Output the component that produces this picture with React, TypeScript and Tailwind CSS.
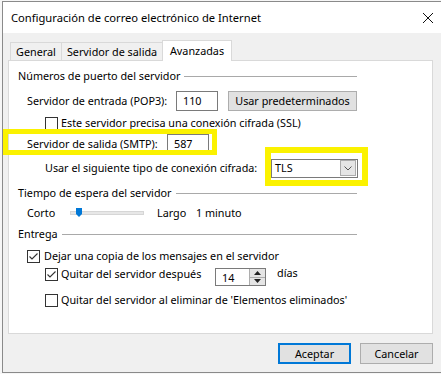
import React from "react";

function CheckBox({ checked }: { checked?: boolean }) {
  return (
    <svg width="13" height="13" viewBox="0 0 13 13" className="shrink-0">
      <rect x="0.5" y="0.5" width="12" height="12" fill="#ffffff" stroke="#333333" />
      {checked && (
        <path d="M2.5 6.5 L5 9 L10.5 3.5" fill="none" stroke="#333333" strokeWidth="1.1" />
      )}
    </svg>
  );
}

function GroupHeader({ label }: { label: string }) {
  return (
    <div className="flex items-center h-[16px] w-[339px]">
      <span className="whitespace-nowrap">{label}</span>
      <div className="flex-1 h-px bg-[#a9a9a9] ml-[4px]" />
    </div>
  );
}

export default function App() {
  return (
    <div className="w-[441px] h-[374px] bg-[#f6f6f6] overflow-hidden font-['Noto_Sans',sans-serif] text-[10.8px] leading-[16px] text-black">
      <div className="ml-[2px] mt-[1px] h-[372px] border-l border-t border-b border-[#8a8a8a] flex flex-col bg-[#f0f0f0]">
        {/* Title bar */}
        <div className="h-[31px] shrink-0 bg-white flex items-center justify-between pl-[8px] pr-[7px]">
          <span className="text-[11.2px] whitespace-nowrap">Configuración de correo electrónico de Internet</span>
          <svg width="12" height="12" viewBox="0 0 12 12">
            <path d="M1 1 L11 11 M11 1 L1 11" stroke="#111" strokeWidth="1" />
          </svg>
        </div>

        {/* Body */}
        <div className="flex-1 flex flex-col pt-[7px] pl-[5px] pr-[8px]">
          {/* Tabs */}
          <div className="flex items-end h-[20px] pl-[2px]">
            <div className="h-[18px] w-[52px] border-l border-t border-r border-[#d9d9d9] bg-[#f0f0f0] flex items-center justify-center">
              General
            </div>
            <div className="h-[18px] w-[101px] border-t border-r border-[#d9d9d9] bg-[#f0f0f0] flex items-center justify-center">
              Servidor de salida
            </div>
            <div className="h-[21px] w-[70px] -ml-px mb-[-1px] relative z-10 border-l border-t border-r border-[#d9d9d9] bg-white flex items-start justify-center pt-[2px]">
              Avanzadas
            </div>
          </div>

          {/* Panel */}
          <div className="h-[274px] bg-white border border-[#d9d9d9] pl-[9px] flex flex-col">
            <div className="mt-[7px]">
              <GroupHeader label="Números de puerto del servidor" />
            </div>

            {/* POP3 */}
            <div className="mt-[7px] h-[20px] flex items-center pl-[9px]">
              <span className="w-[149px] whitespace-nowrap">Servidor de entrada (POP3):</span>
              <div className="w-[42px] h-[20px] border border-[#7a7a7a] bg-white flex items-center pl-[6px]">110</div>
              <div className="ml-[10px] w-[129px] h-[20px] border border-[#adadad] bg-[#e1e1e1] flex items-center justify-center">
                Usar predeterminados
              </div>
            </div>

            {/* SSL */}
            <div className="mt-[4px] h-[16px] flex items-center pl-[27px] gap-[3px]">
              <CheckBox />
              <span className="whitespace-nowrap">Este servidor precisa una conexión cifrada (SSL)</span>
            </div>

            {/* SMTP */}
            <div className="mt-[3px] h-[20px] flex items-center pl-[9px] relative">
              <span className="w-[140px] whitespace-nowrap">Servidor de salida (SMTP):</span>
              <div className="w-[42px] h-[20px] border border-[#7a7a7a] bg-white flex items-center pl-[6px]">587</div>
              <div className="absolute left-[-15px] top-[-5px] w-[214px] h-[26px] border-[5px] border-[#fbf200] pointer-events-none" />
            </div>

            {/* Encryption */}
            <div className="mt-[4px] h-[20px] flex items-center pl-[27px] relative">
              <span className="w-[226px] whitespace-nowrap">Usar el siguiente tipo de conexión cifrada:</span>
              <div className="w-[87px] h-[19px] border border-[#7a7a7a] bg-white flex items-center justify-between pl-[3px] pr-px">
                <span>TLS</span>
                <div className="w-[16px] h-[16px] bg-[#e5e5e5] border border-[#acacac] flex items-center justify-center">
                  <svg width="8" height="5" viewBox="0 0 8 5">
                    <path d="M0.5 0.5 L4 4 L7.5 0.5" fill="none" stroke="#555" strokeWidth="1" />
                  </svg>
                </div>
              </div>
              <div className="absolute left-[247px] top-[-11px] w-[103px] h-[39px] border-[6px] border-[#fbf200] pointer-events-none" />
            </div>

            <div className="mt-[7px]">
              <GroupHeader label="Tiempo de espera del servidor" />
            </div>

            {/* Slider */}
            <div className="mt-[4px] h-[16px] flex items-center pl-[9px]">
              <span className="w-[43px]">Corto</span>
              <div className="relative w-[74px] h-[4px] bg-[#e7e7e7] border border-[#d6d6d6]">
                <svg width="6" height="9" viewBox="0 0 6 9" className="absolute left-[5px] top-[-4px]">
                  <path d="M0 0 H6 V6 L3 9 L0 6 Z" fill="#0078d7" />
                </svg>
              </div>
              <span className="ml-[13px] w-[39px]">Largo</span>
              <span>1 minuto</span>
            </div>

            <div className="mt-[5px]">
              <GroupHeader label="Entrega" />
            </div>

            {/* Check 1 */}
            <div className="mt-[6px] h-[16px] flex items-center pl-[9px] gap-[4px]">
              <CheckBox checked />
              <span className="whitespace-nowrap">Dejar una copia de los mensajes en el servidor</span>
            </div>

            {/* Check 2 */}
            <div className="mt-[2px] flex items-start pl-[27px]">
              <div className="w-[170px] h-[16px] flex items-center gap-[3px]">
                <CheckBox checked />
                <span className="whitespace-nowrap">Quitar del servidor después</span>
              </div>
              <div className="mt-[2px] w-[51px] h-[18px] border border-[#7a7a7a] bg-white flex">
                <div className="flex-1 flex items-center pl-[6px] pt-[2px]">14</div>
                <div className="w-[16px] flex flex-col border-l border-[#adadad]">
                  <div className="flex-1 bg-[#e5e5e5] border-b border-[#adadad] flex items-center justify-center">
                    <svg width="7" height="4" viewBox="0 0 7 4">
                      <path d="M0 4 L3.5 0 L7 4 Z" fill="#222" />
                    </svg>
                  </div>
                  <div className="flex-1 bg-[#e5e5e5] flex items-center justify-center">
                    <svg width="7" height="4" viewBox="0 0 7 4">
                      <path d="M0 0 L3.5 4 L7 0 Z" fill="#222" />
                    </svg>
                  </div>
                </div>
              </div>
              <span className="ml-[11px] -mt-px">días</span>
            </div>

            {/* Check 3 */}
            <div className="mt-[6px] h-[16px] flex items-center pl-[27px] gap-[3px]">
              <CheckBox />
              <span className="whitespace-nowrap">Quitar del servidor al eliminar de 'Elementos eliminados'</span>
            </div>
          </div>

          {/* Buttons */}
          <div className="mt-[9px] flex justify-end gap-[9px]">
            <div className="w-[73px] h-[21px] border-2 border-[#0078d7] bg-[#e1e1e1] flex items-center justify-center">
              Aceptar
            </div>
            <div className="w-[73px] h-[21px] border border-[#adadad] bg-[#e1e1e1] flex items-center justify-center">
              Cancelar
            </div>
          </div>
        </div>
      </div>
    </div>
  );
}
